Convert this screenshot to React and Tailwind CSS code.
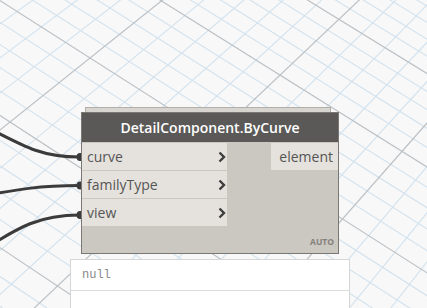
import React from 'react';

function solveH(src, dst) {
  const rows = [];
  for (let i = 0; i < 4; i++) {
    const [u, v] = src[i];
    const [x, y] = dst[i];
    rows.push([u, v, 1, 0, 0, 0, -u * x, -v * x, x]);
    rows.push([0, 0, 0, u, v, 1, -u * y, -v * y, y]);
  }
  const n = 8;
  const M = rows;
  for (let c = 0; c < n; c++) {
    let p = c;
    for (let r = c + 1; r < n; r++) if (Math.abs(M[r][c]) > Math.abs(M[p][c])) p = r;
    [M[c], M[p]] = [M[p], M[c]];
    for (let r = 0; r < n; r++) {
      if (r === c) continue;
      const f = M[r][c] / M[c][c];
      for (let k = c; k <= n; k++) M[r][k] -= f * M[c][k];
    }
  }
  return M.map((r, i) => r[n] / r[i]);
}

const H = solveH(
  [[0, 0], [10, 0], [0, 5], [10, 5]],
  [[90, 58], [342.5, 219], [161.4, 0.9], [402, 151.4]]
);

function proj(u, v) {
  const [a, b, c, d, e, f, g, h] = H;
  const w = g * u + h * v + 1;
  return [(a * u + b * v + c) / w, (d * u + e * v + f) / w, w];
}

function segment(fixed, isU, lo, hi) {
  const pt = (t) => (isU ? proj(fixed, t) : proj(t, fixed));
  let a = lo;
  let b = hi;
  const minW = 0.08;
  const wa = pt(a)[2];
  const wb = pt(b)[2];
  if (wa < minW && wb < minW) return null;
  if (wa < minW || wb < minW) {
    const t0 = (minW - wa) / (wb - wa);
    const tc = a + (b - a) * t0;
    if (wa < minW) a = tc;
    else b = tc;
  }
  const p1 = pt(a);
  const p2 = pt(b);
  return [p1[0], p1[1], p2[0], p2[1]];
}

function Grid() {
  const minor = [];
  const major = [];
  for (let u = -30; u <= 40; u++) {
    const s = segment(u, true, -40, 30);
    if (!s) continue;
    (u % 5 === 0 ? major : minor).push(s);
  }
  for (let v = -40; v <= 30; v++) {
    const s = segment(v, false, -30, 40);
    if (!s) continue;
    (v % 5 === 0 ? major : minor).push(s);
  }
  return (
    <svg className="absolute inset-0" width="427" height="308" viewBox="0 0 427 308">
      {minor.map((s, i) => (
        <line key={'m' + i} x1={s[0]} y1={s[1]} x2={s[2]} y2={s[3]} stroke="#d2e2ee" strokeWidth="1.1" />
      ))}
      {major.map((s, i) => (
        <line key={'M' + i} x1={s[0]} y1={s[1]} x2={s[2]} y2={s[3]} stroke="#bcc1c6" strokeWidth="1.2" />
      ))}
    </svg>
  );
}

function Wires() {
  return (
    <svg className="absolute inset-0" width="427" height="308" viewBox="0 0 427 308">
      <path d="M -25 121 C 25 147, 40 157, 80 157" fill="none" stroke="#3b3b3b" strokeWidth="3" />
      <path d="M -30 198 C 20 189, 40 185.5, 80 185.5" fill="none" stroke="#3b3b3b" strokeWidth="3" />
      <path d="M -20 252 C 20 226, 40 215, 80 215" fill="none" stroke="#3b3b3b" strokeWidth="3" />
      <path d="M 82 153 L 80 153 A 3.5 4 0 0 0 80 161 L 82 161 Z" fill="#3b3b3b" />
      <path d="M 82 181.5 L 80 181.5 A 3.5 4 0 0 0 80 189.5 L 82 189.5 Z" fill="#3b3b3b" />
      <path d="M 82 211 L 80 211 A 3.5 4 0 0 0 80 219 L 82 219 Z" fill="#3b3b3b" />
    </svg>
  );
}

function Chevron() {
  return (
    <svg width="9" height="12" viewBox="0 0 9 12">
      <path d="M2.5 1.5 L7 6 L2.5 10.5" fill="none" stroke="#3d3d3d" strokeWidth="2.4" />
    </svg>
  );
}

function InPort({ label }) {
  return (
    <div className="h-[27px] bg-[#e5e2dd] flex items-center justify-between pl-[5px] pr-[1px]">
      <span className="text-[14px] text-[#555555] leading-none">{label}</span>
      <Chevron />
    </div>
  );
}

export default function App() {
  return (
    <div
      className="relative w-[427px] h-[308px] overflow-hidden bg-[#f8f8f8]"
      style={{ fontFamily: '"Open Sans", "Noto Sans", sans-serif' }}
    >
      <Grid />
      <Wires />
      <div className="absolute left-[85px] top-[107px] w-[246px] h-[12px] bg-[#d8d5d0] border border-[#b3b0ab]" />
      <div className="absolute left-[81px] top-[112px] w-[258px] h-[142px] border border-[#7b7873] bg-[#cbc7c1] flex flex-col">
        <div className="h-[29px] bg-[#5b5957] flex items-center justify-center">
          <span className="text-white text-[14px] font-semibold leading-none">DetailComponent.ByCurve</span>
        </div>
        <div className="flex justify-between pt-[1px]">
          <div className="w-[145px] flex flex-col gap-[1px]">
            <InPort label="curve" />
            <InPort label="familyType" />
            <InPort label="view" />
          </div>
          <div className="w-[67px] h-[27px] bg-[#e5e2dd] flex items-center justify-end pr-[5px]">
            <span className="text-[14px] text-[#555555] leading-none">element</span>
          </div>
        </div>
        <div className="flex-1 flex items-end justify-end pr-[4px] pb-[7px]">
          <span className="text-[8.5px] font-bold text-[#85817c] leading-none">AUTO</span>
        </div>
      </div>
      <div className="absolute left-[70px] top-[259px] w-[280px] h-[60px] bg-white border border-[#d6d6d6] flex flex-col">
        <div className="h-[31px] flex items-center pl-[11px] border-b border-[#dcdcdc]">
          <span className="text-[12px] text-[#8a8a8a]" style={{ fontFamily: '"Liberation Mono", "DejaVu Sans Mono", monospace' }}>
            null
          </span>
        </div>
        <div className="flex-1" />
      </div>
    </div>
  );
}
